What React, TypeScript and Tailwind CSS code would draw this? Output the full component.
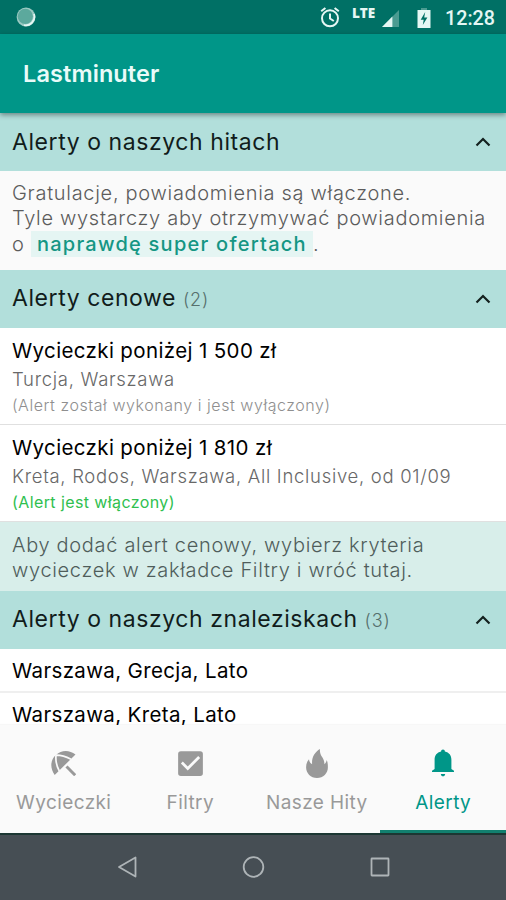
import type { ReactNode } from "react";
import { MdCheckBox } from "react-icons/md";

export default function App() {
  return (
    <div className="flex h-[900px] w-[506px] flex-col overflow-hidden bg-white font-['Inter',sans-serif] text-black">
      <StatusBar />

      {/* App bar */}
      <header className="z-10 flex h-[79px] shrink-0 items-center bg-[#009688] pl-[23px] shadow-[0_2px_5px_rgba(0,0,0,0.4)]">
        <h1 className="text-[23.5px] leading-7 font-semibold tracking-[0.1px] text-[#e9fbf9]">Lastminuter</h1>
      </header>

      {/* Alerts */}
      <main className="flex min-h-0 flex-1 flex-col overflow-hidden">
        <SectionHeader title="Alerty o naszych hitach" />
        <div className="h-[99px] shrink-0 bg-[#fafafa] px-3 pt-[10px] text-[20px] leading-[25.3px] font-light tracking-[0.7px] whitespace-nowrap text-[#5c5c5c]">
          <p>Gratulacje, powiadomienia są włączone.</p>
          <p>Tyle wystarczy aby otrzymywać powiadomienia</p>
          <p>
            o{" "}
            <span className="bg-[#e5f5f3] px-[6px] py-px font-medium tracking-[1.25px] text-[#159684]">
              naprawdę super ofertach
            </span>
            .
          </p>
        </div>

        <SectionHeader title="Alerty cenowe" count={2} />
        <PriceAlert title="Wycieczki poniżej 1 500 zł" criteria="Turcja, Warszawa">
          <p className="text-[16px] leading-5 font-light tracking-[0.55px] text-[#8f8f8f]">
            (Alert został wykonany i jest wyłączony)
          </p>
        </PriceAlert>
        <PriceAlert title="Wycieczki poniżej 1 810 zł" criteria="Kreta, Rodos, Warszawa, All Inclusive, od 01/09">
          <p className="text-[16px] leading-5 tracking-[0.4px] text-[#2fc04f]">(Alert jest włączony)</p>
        </PriceAlert>
        <div className="h-[69px] shrink-0 bg-[#d8eeea] px-3 pt-[11px] text-[20px] leading-[25px] font-light tracking-[0.68px] whitespace-nowrap text-[#4f5d5b]">
          <p>Aby dodać alert cenowy, wybierz kryteria</p>
          <p>wycieczek w zakładce Filtry i wróć tutaj.</p>
        </div>

        <SectionHeader title="Alerty o naszych znaleziskach" count={3} />
        <FindAlert title="Warszawa, Grecja, Lato" />
        <FindAlert title="Warszawa, Kreta, Lato" />
      </main>

      {/* Tabs */}
      <nav className="z-10 grid h-[108px] shrink-0 grid-cols-4 bg-[#fafafa] shadow-[0_-1px_1px_rgba(0,0,0,0.03)]">
        <Tab label="Wycieczki" icon={<UmbrellaIcon />} />
        <Tab label="Filtry" icon={<MdCheckBox className="ml-px size-[33px]" />} />
        <Tab label="Nasze Hity" icon={<FlameIcon />} />
        <Tab label="Alerty" icon={<BellIcon />} active />
      </nav>

      {/* System buttons */}
      <footer className="flex h-[67px] shrink-0 items-center justify-center border-t-2 border-[#1c3733] bg-[#464e54]">
        <svg viewBox="0 0 506 64" className="h-16 w-[506px]" fill="none" stroke="#aeb4b7" strokeWidth="1.8" strokeLinejoin="round">
          <path d="M119 31 135.5 21.500v19z" />
          <circle cx="253.5" cy="31" r="9.8" />
          <rect x="371.5" y="22.5" width="17" height="17" rx="0.5" />
        </svg>
      </footer>
    </div>
  );
}

function StatusBar() {
  return (
    <div className="flex h-[34px] shrink-0 items-center bg-[#007065] text-[#e5f7f4]">
      <svg viewBox="0 0 20 20" className="ml-4 size-5">
        <circle cx="10" cy="10" r="9.4" fill="#9ccac3" />
        <circle cx="9.3" cy="9.3" r="7.6" fill="#5ca99d" />
        <path d="M18 7a8.7 8.7 0 0 1-10 11.2" fill="none" stroke="#e5f7f4" strokeWidth="1.8" />
      </svg>
      <svg viewBox="0 0 24 24" className="ml-[282px] size-6" fill="none" stroke="currentColor" strokeWidth="2">
        <circle cx="12" cy="13.3" r="8" />
        <path d="M12 8.5v5l3.8 2.5M3.2 6.3 7.4 3M20.8 6.3 16.6 3" />
      </svg>
      <span className="mb-[9px] ml-[10px] w-[25px] font-['Open_Sans',sans-serif] text-[13.5px] leading-4 font-extrabold">LTE</span>
      <svg viewBox="0 0 18 18" className="mt-[3px] ml-[5px] size-[17px]">
        <path d="M0 18 18 0v18z" fill="#4a9b91" />
        <path d="M0 18 11 7v11z" fill="currentColor" />
      </svg>
      <svg viewBox="0 0 14 22" className="mt-px ml-[18px] h-[22px] w-[14px]">
        <path d="M4 1h6v2H4z" fill="#4a9b91" />
        <path d="M.5 3h13v18H.5z" fill="currentColor" />
        <path d="M8.2 5 3.7 12.800h3L5.800 18l4.600-7.400H7.200z" fill="#007065" />
      </svg>
      <span className="mt-[3px] ml-[14px] font-['Roboto',sans-serif] text-[19.7px] leading-6 font-medium whitespace-nowrap">12:28</span>
    </div>
  );
}

function SectionHeader({ title, count }: { title: string; count?: number }) {
  return (
    <div className="flex h-[58px] shrink-0 items-center justify-between bg-[#b2dfdb] pr-[15px] pl-3">
      <h2 className="text-[23px] leading-7 tracking-[0.57px] whitespace-nowrap text-[#111c1b]">
        {title}
        {count !== undefined && (
          <span className="ml-[7px] text-[18px] font-light tracking-[0.8px] text-[#56706d]">({count})</span>
        )}
      </h2>
      <svg viewBox="0 0 16 10" className="h-[10px] w-4" fill="none" stroke="#14211f" strokeWidth="2.2">
        <path d="m1.5 8.5 6.5-6.5 6.5 6.5" />
      </svg>
    </div>
  );
}

function PriceAlert({ title, criteria, children }: { title: string; criteria: string; children: ReactNode }) {
  return (
    <div className="h-[97px] shrink-0 border-b border-[#e0e0e0] px-3 pt-[10px] whitespace-nowrap">
      <h3 className="text-[20.5px] leading-[26px] tracking-[0.37px]">{title}</h3>
      <p className="mt-[3px] mb-1 text-[18.5px] leading-6 font-light tracking-[0.7px] text-[#686868]">{criteria}</p>
      {children}
    </div>
  );
}

function FindAlert({ title }: { title: string }) {
  return (
    <div className="h-[43.5px] shrink-0 border-b-2 border-[#efefef] px-3 pt-[9px] text-[20.5px] leading-[26px] tracking-[0.36px] whitespace-nowrap">
      {title}
    </div>
  );
}

function Tab({ label, icon, active = false }: { label: string; icon: ReactNode; active?: boolean }) {
  return (
    <div
      className={
        active
          ? "flex flex-col items-center border-b-3 border-[#12806f] pt-[21px] text-[#009688]"
          : "flex flex-col items-center pt-[21px] text-[#999999]"
      }
    >
      <div className="flex h-[34px] items-center justify-center">{icon}</div>
      <span className="mt-[11px] ml-px text-[19px] leading-6 tracking-[0.4px] whitespace-nowrap">{label}</span>
    </div>
  );
}

function UmbrellaIcon() {
  return (
    <svg viewBox="0 0 25 25" className="size-[25px]" fill="none">
      <path d="M3.700 24C-1.200 17.500-.8 8.500 5 4 10.500-1.300 18.500-1.100 24.500 3.500z" fill="currentColor" />
      <path d="M5 4.200C10 4 15.500 6 20 8.300M5 4.200C4.500 9.500 5.500 15 8.300 20" stroke="#fafafa" strokeWidth="1.700" />
      <path d="m15.500 15.500 8.700 8.700" stroke="currentColor" strokeWidth="3" />
    </svg>
  );
}

function FlameIcon() {
  return (
    <svg viewBox="0 0 22 29" className="ml-px h-[29px] w-[22px]" fill="currentColor">
      <path d="M14 0C8.8 3 5.5 8.2 6.1 15.2 4.200 14.200 3.200 12.300 3 10.200 1 12.400.1 15 .1 18.200.1 24.300 4.800 29 11 29s10.900-4.700 10.900-10.800c0-2.900-.2-5.300-1.300-7.200-.1 1.700-1 3.200-2.300 4.200.3-2.600-.6-4.600-2-7C14.500 5.600 13.600 3 14 0z" />
    </svg>
  );
}

function BellIcon() {
  return (
    <svg viewBox="0 0 22 28" className="ml-px h-7 w-[22px]" fill="currentColor">
      <path d="M11 .5c1.200 0 1.900.8 1.900 2 4.200.9 6.500 4 6.500 8.200V20l2.600 1.800V23H0v-1.200L2.600 20v-9.300C2.600 6.500 4.900 3.400 9.100 2.500 9.100 1.300 9.800.5 11 .5zM8.800 25h4.400c-.2 1.500-1 2.300-2.200 2.300S9 26.500 8.800 25z" />
    </svg>
  );
}
